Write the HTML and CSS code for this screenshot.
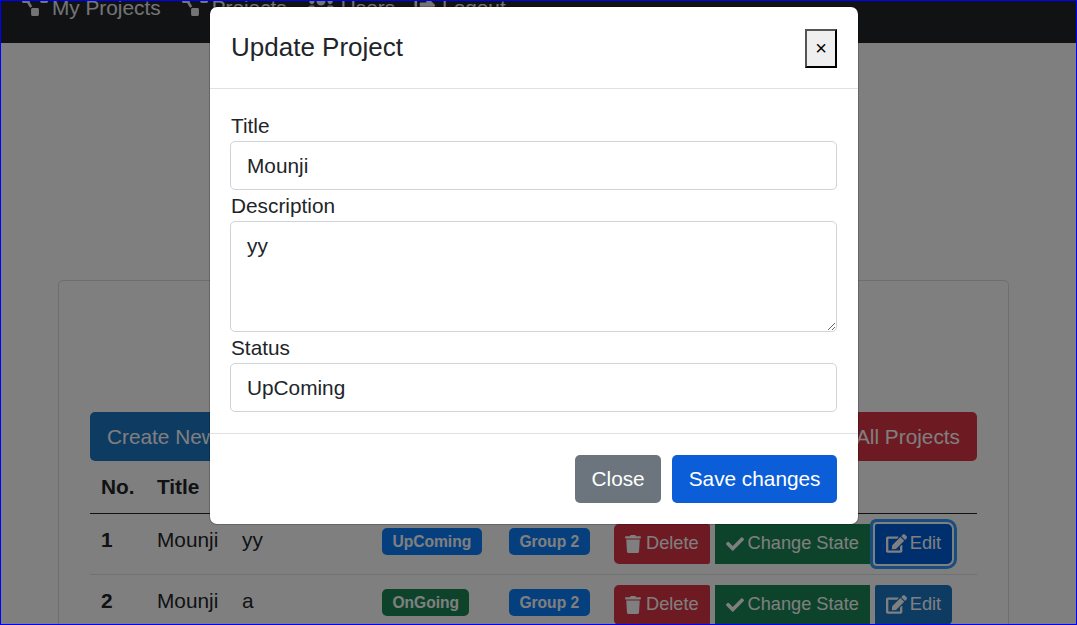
FILE: index.html
```html
<!DOCTYPE html>
<html lang="en">
<head>
    <meta charset="UTF-8">
    <title>Projects</title>
    <link rel="stylesheet" href="styles.css">
</head>
<body>
    <svg class="icon-defs" width="0" height="0">
        <symbol id="i-diagram" viewBox="0 0 640 512"><path d="M384 320H256c-17.67 0-32 14.33-32 32v128c0 17.67 14.33 32 32 32h128c17.67 0 32-14.33 32-32V352c0-17.67-14.33-32-32-32zM192 32c0-17.67-14.33-32-32-32H32C14.33 0 0 14.33 0 32v128c0 17.67 14.33 32 32 32h95.72l73.16 128.04C211.98 300.98 232.4 288 256 288h.28L192 175.51V128h224V64H192V32zM608 0H480c-17.67 0-32 14.33-32 32v128c0 17.67 14.33 32 32 32h128c17.67 0 32-14.33 32-32V32c0-17.67-14.33-32-32-32z"/></symbol>
        <symbol id="i-trash" viewBox="0 0 448 512"><path d="M432 32H312l-9.4-18.7A24 24 0 0 0 281.1 0H166.8a23.72 23.72 0 0 0-21.4 13.3L136 32H16A16 16 0 0 0 0 48v32a16 16 0 0 0 16 16h416a16 16 0 0 0 16-16V48a16 16 0 0 0-16-16zM53.2 467a48 48 0 0 0 47.9 45h245.8a48 48 0 0 0 47.9-45L416 128H32z"/></symbol>
        <symbol id="i-check" viewBox="0 0 512 512"><path d="M173.898 439.404l-166.4-166.4c-9.997-9.997-9.997-26.206 0-36.204l36.203-36.204c9.997-9.998 26.207-9.998 36.204 0L192 312.69 432.095 72.596c9.997-9.997 26.207-9.997 36.204 0l36.203 36.204c9.997 9.997 9.997 26.206 0 36.204l-294.4 294.401c-9.998 9.997-26.207 9.997-36.204-.001z"/></symbol>
        <symbol id="i-edit" viewBox="0 0 576 512"><path d="M402.6 83.2l90.2 90.2c3.8 3.8 3.8 10 0 13.8L274.4 405.6l-92.8 10.3c-12.4 1.4-22.9-9.1-21.5-21.5l10.3-92.8L388.8 83.2c3.8-3.8 10-3.8 13.8 0zm162-22.9l-48.8-48.8c-15.2-15.2-39.9-15.2-55.2 0l-35.4 35.4c-3.8 3.8-3.8 10 0 13.8l90.2 90.2c3.8 3.8 10 3.8 13.8 0l35.4-35.4c15.2-15.3 15.2-40 0-55.2zM384 346.2V448H64V128h229.8c3.2 0 6.2-1.3 8.5-3.5l40-40c7.6-7.6 2.2-20.5-8.5-20.5H48C21.5 64 0 85.5 0 112v352c0 26.5 21.5 48 48 48h352c26.5 0 48-21.5 48-48V306.2c0-10.7-12.9-16-20.5-8.5l-40 40c-2.2 2.3-3.5 5.3-3.5 8.5z"/></symbol>
        <symbol id="i-users" viewBox="0 0 640 512"><path d="M96 224c35.300 0 64-28.700 64-64s-28.700-64-64-64-64 28.700-64 64 28.700 64 64 64zm448 0c35.300 0 64-28.700 64-64s-28.700-64-64-64-64 28.700-64 64 28.700 64 64 64zm32 32h-64c-17.600 0-33.500 7.100-45.100 18.600 40.300 22.100 68.900 62 75.100 109.400h66c17.700 0 32-14.300 32-32v-32c0-35.300-28.700-64-64-64zm-256 0c61.900 0 112-50.100 112-112S381.900 32 320 32 208 82.100 208 144s50.100 112 112 112zm76.800 32h-8.300c-20.800 10-43.900 16-68.500 16s-47.600-6-68.500-16h-8.300C179.600 288 128 339.600 128 403.200V432c0 26.500 21.500 48 48 48h288c26.500 0 48-21.500 48-48v-28.800c0-63.600-51.600-115.200-115.200-115.200zm-223.700-13.400C161.500 263.100 145.600 256 128 256H64c-35.300 0-64 28.700-64 64v32c0 17.700 14.300 32 32 32h65.900c6.300-47.400 34.900-87.300 75.200-109.400z"/></symbol>
        <symbol id="i-logout" viewBox="0 0 512 512"><path d="M497 273L329 441c-15 15-41 4.500-41-17v-96H152c-13.300 0-24-10.700-24-24v-96c0-13.300 10.700-24 24-24h136V88c0-21.400 25.900-32 41-17l168 168c9.300 9.400 9.300 24.600 0 34zM192 436v-40c0-6.600-5.400-12-12-12H96c-17.700 0-32-14.300-32-32V160c0-17.700 14.300-32 32-32h84c6.600 0 12-5.400 12-12V76c0-6.600-5.400-12-12-12H96c-53 0-96 43-96 96v192c0 53 43 96 96 96h84c6.600 0 12-5.400 12-12z"/></symbol>
    </svg>

    <nav class="navbar">
        <a class="nav-link"><svg class="nav-icon"><use href="#i-diagram"/></svg>My Projects</a>
        <a class="nav-link"><svg class="nav-icon"><use href="#i-diagram"/></svg>Projects</a>
        <a class="nav-link"><svg class="nav-icon nav-icon-users"><use href="#i-users"/></svg>Users</a>
        <a class="nav-link"><svg class="nav-icon nav-icon-logout"><use href="#i-logout"/></svg>Logout</a>
    </nav>

    <main class="content">
        <div class="card">
            <div class="toolbar">
                <button class="btn btn-lg btn-primary">Create New Project</button>
                <button class="btn btn-lg btn-danger">Delete All Projects</button>
            </div>
            <table class="table">
                <colgroup>
                    <col class="col-no"><col class="col-title"><col class="col-desc"><col class="col-status"><col class="col-group"><col>
                </colgroup>
                <thead>
                    <tr><th>No.</th><th>Title</th><th>Description</th><th>Status</th><th>Group</th><th>Actions</th></tr>
                </thead>
                <tbody>
                    <tr>
                        <th>1</th>
                        <td>Mounji</td>
                        <td>yy</td>
                        <td><span class="badge badge-blue">UpComing</span></td>
                        <td><span class="badge badge-blue">Group 2</span></td>
                        <td>
                            <div class="actions">
                                <button class="btn btn-sm btn-danger"><svg class="btn-icon icon-trash"><use href="#i-trash"/></svg>Delete</button>
                                <button class="btn btn-sm btn-success"><svg class="btn-icon icon-check"><use href="#i-check"/></svg>Change State</button>
                                <button class="btn btn-sm btn-primary is-focused"><svg class="btn-icon icon-edit"><use href="#i-edit"/></svg>Edit</button>
                            </div>
                        </td>
                    </tr>
                    <tr>
                        <th>2</th>
                        <td>Mounji</td>
                        <td>a</td>
                        <td><span class="badge badge-green">OnGoing</span></td>
                        <td><span class="badge badge-blue">Group 2</span></td>
                        <td>
                            <div class="actions">
                                <button class="btn btn-sm btn-danger"><svg class="btn-icon icon-trash"><use href="#i-trash"/></svg>Delete</button>
                                <button class="btn btn-sm btn-success"><svg class="btn-icon icon-check"><use href="#i-check"/></svg>Change State</button>
                                <button class="btn btn-sm btn-primary"><svg class="btn-icon icon-edit"><use href="#i-edit"/></svg>Edit</button>
                            </div>
                        </td>
                    </tr>
                </tbody>
            </table>
        </div>
    </main>

    <div class="backdrop"></div>

    <div class="modal">
        <div class="modal-header">
            <h5 class="modal-title">Update Project</h5>
            <button class="close-btn">&times;</button>
        </div>
        <form class="modal-body">
            <label for="titleInput">Title</label>
            <input type="text" id="titleInput" value="Mounji">
            <label for="descInput">Description</label>
            <textarea id="descInput">yy</textarea>
            <label for="statusInput">Status</label>
            <input type="text" id="statusInput" value="UpComing">
        </form>
        <div class="modal-footer">
            <button class="btn btn-lg btn-secondary">Close</button>
            <button class="btn btn-lg btn-save">Save changes</button>
        </div>
    </div>
</body>
</html>
```

FILE: styles.css
```css
* {
    box-sizing: border-box;
}
html, body {
    height: 100%;
}
body {
    margin: 0;
    position: relative;
    overflow: hidden;
    font-family: "Liberation Sans", Arial, sans-serif;
    font-size: 20.8px;
    line-height: 1.5;
    color: #212529;
    background-color: #fff;
    border: 1px solid #0000ff;
}
.icon-defs {
    position: absolute;
}

/* top bar, scrolled so only its lower part shows */
.navbar {
    height: 42px;
    padding-left: 21px;
    display: flex;
    align-items: flex-start;
    gap: 21px;
    overflow: hidden;
    background-color: #212529;
}
.nav-link {
    display: flex;
    align-items: center;
    margin-top: -9px;
    color: #fff;
    opacity: .9;
}
.nav-icon {
    width: 26px;
    height: 21px;
    margin: 0 4px 5px 0;
    fill: currentColor;
}
.nav-icon-users {
    margin-right: 7px;
}
.nav-icon-logout {
    width: 22px;
    margin-left: -2px;
    margin-right: 6px;
}

.content {
    padding: 237px 67px 0 57px;
}
.card {
    height: 400px;
    padding: 131px 31px 0;
    border: 1px solid #dcdcdc;
    border-radius: 5px;
}
.toolbar {
    display: flex;
    justify-content: space-between;
}

/* buttons */
.btn {
    border: 1px solid transparent;
    border-radius: 5px;
    font-family: inherit;
    color: #fff;
}
.btn-lg {
    height: 49px;
    padding: 0 16px;
    font-size: 20.8px;
}
.btn-sm {
    height: 40px;
    padding: 0 10px;
    font-size: 18.2px;
    display: inline-flex;
    align-items: center;
}
.btn-primary {
    background-color: #1b76c4;
}
.btn-danger {
    background-color: #dc3545;
}
.btn-success {
    background-color: #198754;
}
.btn-secondary {
    background-color: #6c757d;
}
.btn-save {
    background-color: #0b5ed7;
}
.btn-icon {
    height: 18px;
    margin-right: 5px;
    fill: currentColor;
}
.icon-trash {
    width: 16px;
}
.icon-check {
    width: 18px;
    margin-right: 4px;
}
.icon-edit {
    width: 21px;
    height: 19px;
    margin-right: 3px;
}

/* table */
.table {
    width: 100%;
    border-collapse: collapse;
    table-layout: fixed;
}
.col-no {
    width: 56px;
}
.col-title {
    width: 85px;
}
.col-desc {
    width: 140px;
}
.col-status {
    width: 127px;
}
.col-group {
    width: 105px;
}
.table thead th {
    height: 52px;
    padding: 0 11px;
    text-align: left;
    white-space: nowrap;
    overflow: hidden;
    border-bottom: 1px solid #212529;
}
.table tbody th, .table tbody td {
    height: 61px;
    padding: 10px 11px 0;
    text-align: left;
    vertical-align: top;
    border-bottom: 1px solid #dee2e6;
}
.actions {
    display: flex;
    gap: 5px;
}
.actions .btn-danger {
    border-radius: 5px 2px 2px 5px;
}
.actions .btn-success {
    border-radius: 0;
}
.actions .btn-primary {
    border-radius: 2px 5px 5px 2px;
}
.actions .is-focused {
    background-color: #005fdc;
    box-shadow: 0 0 0 2px #fff, 0 0 0 5px #2f9dff;
}
.badge {
    display: inline-block;
    padding: 6px 10.4px 5px;
    border-radius: 5px;
    font-size: 15.6px;
    font-weight: 700;
    line-height: 16px;
    white-space: nowrap;
    color: #fff;
}
.badge-blue {
    background-color: #0d7efd;
}
.badge-green {
    background-color: #198754;
}

.backdrop {
    position: absolute;
    inset: 0;
    background-color: rgba(0, 0, 0, .5);
}

/* dialog */
.modal {
    position: absolute;
    left: 208px;
    top: 5px;
    width: 650px;
    height: 519px;
    background-color: #fff;
    background-clip: padding-box;
    border: 1px solid rgba(0, 0, 0, .2);
    border-radius: 8px;
}
.modal-header {
    height: 82px;
    padding: 0 21px;
    display: flex;
    align-items: center;
    justify-content: space-between;
    border-bottom: 1px solid #dee2e6;
}
.modal-title {
    margin: 0;
    font-size: 26px;
    font-weight: 400;
    line-height: 1.2;
}
.close-btn {
    width: 32px;
    height: 39px;
    margin-top: 2px;
    padding: 0;
    font-size: 20px;
    color: #000;
    background-color: #efefef;
    border: 2px outset #000;
}
.modal-body {
    padding: 20.6px 21px 21.4px 20px;
    display: flex;
    flex-direction: column;
    border-bottom: 1px solid #dee2e6;
}
.modal-body label {
    padding-left: 1px;
}
.modal-body input, .modal-body textarea {
    width: 100%;
    padding: 8px 16px;
    font-family: inherit;
    font-size: 20.8px;
    line-height: 1.5;
    color: #212529;
    background-color: #fff;
    border: 1px solid #ced4da;
    border-radius: 5px;
}
.modal-body textarea {
    flex: 0 0 110.4px;
}
.modal-footer {
    padding: 21px 21px 0;
    display: flex;
    justify-content: flex-end;
    gap: 11px;
}
.modal-footer .btn {
    height: 48px;
    padding: 0 15.5px;
}
```
